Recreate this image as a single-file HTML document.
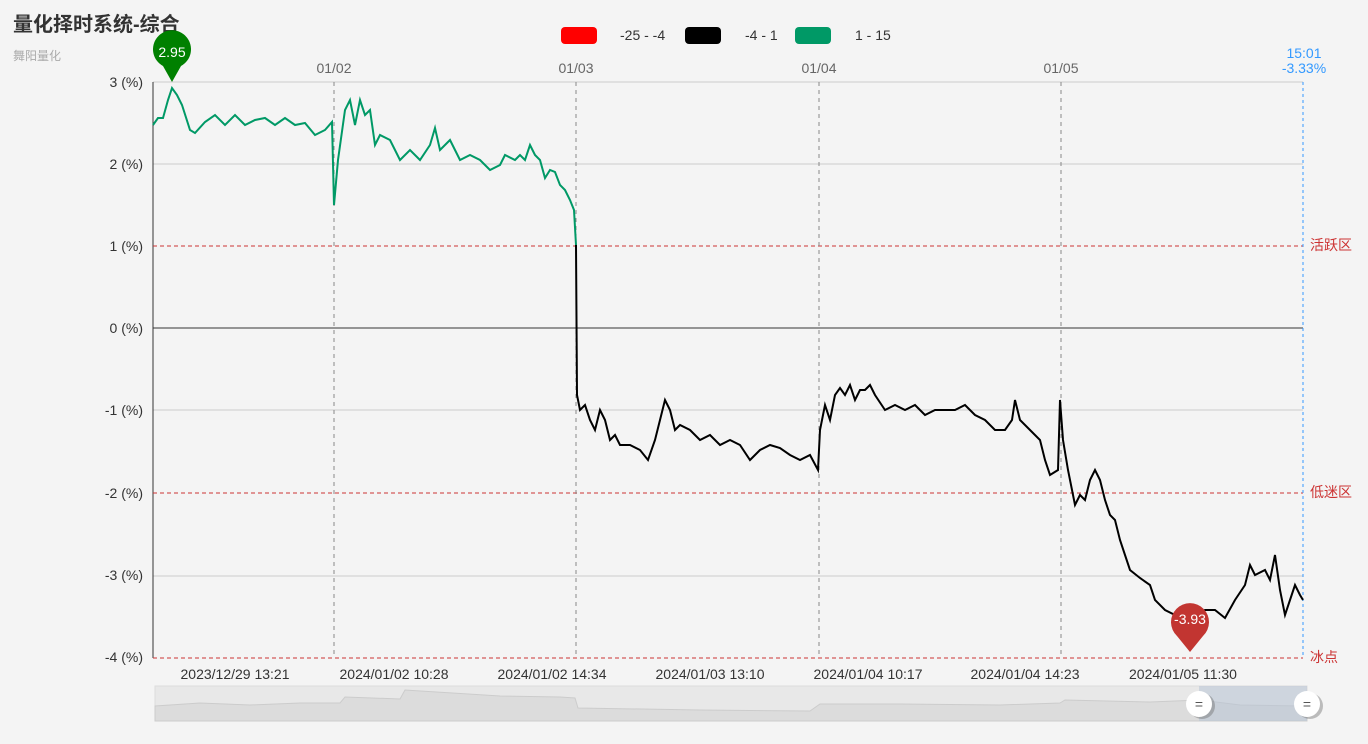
<!DOCTYPE html>
<html><head><meta charset="utf-8"><style>
body{margin:0;background:#f4f4f4;width:1368px;height:739px;overflow:hidden;font-family:"Liberation Sans","Noto Sans CJK SC",sans-serif}
</style></head><body>
<svg width="1368" height="739" xmlns="http://www.w3.org/2000/svg" font-family="Liberation Sans, Noto Sans CJK SC, sans-serif">
<text x="13" y="31" font-size="20" font-weight="bold" fill="#333">量化择时系统-综合</text>
<text x="13" y="60" font-size="12" fill="#aaa">舞阳量化</text>
<rect x="561" y="27" width="36" height="17" rx="4" fill="#f00"/><text x="620" y="40" font-size="14" fill="#333">-25 - -4</text>
<rect x="685" y="27" width="36" height="17" rx="4" fill="#000"/><text x="745" y="40" font-size="14" fill="#333">-4 - 1</text>
<rect x="795" y="27" width="36" height="17" rx="4" fill="#009966"/><text x="855" y="40" font-size="14" fill="#333">1 - 15</text>
<g stroke="#ccc" stroke-width="1">
<line x1="153" y1="82" x2="1303" y2="82"/><line x1="153" y1="164" x2="1303" y2="164"/><line x1="153" y1="410" x2="1303" y2="410"/><line x1="153" y1="576" x2="1303" y2="576"/>
</g>
<line x1="153" y1="328" x2="1303" y2="328" stroke="#333"/>
<line x1="153" y1="82" x2="153" y2="658" stroke="#333"/>
<g stroke="#c33" stroke-dasharray="4,3"><line x1="153" y1="246" x2="1303" y2="246"/><line x1="153" y1="493" x2="1303" y2="493"/><line x1="153" y1="658" x2="1303" y2="658"/></g>
<g stroke="#888" stroke-dasharray="4,4"><line x1="334" y1="82" x2="334" y2="658"/><line x1="576" y1="82" x2="576" y2="658"/><line x1="819" y1="82" x2="819" y2="658"/><line x1="1061" y1="82" x2="1061" y2="658"/></g>
<line x1="1303" y1="82" x2="1303" y2="658" stroke="#39f" stroke-dasharray="3,3"/>
<g font-size="14" fill="#333" text-anchor="end">
<text x="143" y="87">3 (%)</text><text x="143" y="169">2 (%)</text><text x="143" y="251">1 (%)</text><text x="143" y="333">0 (%)</text><text x="143" y="415">-1 (%)</text><text x="143" y="498">-2 (%)</text><text x="143" y="580">-3 (%)</text><text x="143" y="662">-4 (%)</text>
</g>
<g font-size="14" fill="#666" text-anchor="middle"><text x="334" y="73">01/02</text><text x="576" y="73">01/03</text><text x="819" y="73">01/04</text><text x="1061" y="73">01/05</text></g>
<text x="1304" y="58" font-size="14" fill="#39f" text-anchor="middle">15:01</text>
<text x="1304" y="73" font-size="14" fill="#39f" text-anchor="middle">-3.33%</text>
<g font-size="14" fill="#c33"><text x="1310" y="250">活跃区</text><text x="1310" y="497">低迷区</text><text x="1310" y="662">冰点</text></g>
<g font-size="14" fill="#333" text-anchor="middle"><text x="235" y="679">2023/12/29 13:21</text><text x="394" y="679">2024/01/02 10:28</text><text x="552" y="679">2024/01/02 14:34</text><text x="710" y="679">2024/01/03 13:10</text><text x="868" y="679">2024/01/04 10:17</text><text x="1025" y="679">2024/01/04 14:23</text><text x="1183" y="679">2024/01/05 11:30</text></g>
<polyline fill="none" stroke="#009966" stroke-width="2" points="153,125 158,118 163,118 168,100 172,88 177,95 182,105 190,130 195,133 205,122 215,115 225,125 235,115 245,125 255,120 265,118 275,125 285,118 295,125 305,123 315,135 325,130 332,122 334,205 338,160 345,110 350,100 355,125 360,100 365,115 370,110 375,145 380,135 390,140 400,160 410,150 420,160 430,145 435,128 440,150 450,140 460,160 470,155 480,160 490,170 500,165 505,155 515,160 520,155 525,160 530,145 535,155 540,160 545,178 550,170 555,172 560,185 565,190 570,200 574,210 576,245"/>
<polyline fill="none" stroke="#000" stroke-width="2" points="576,245 577,395 580,410 585,405 590,420 595,430 600,410 605,420 610,440 615,435 620,445 630,445 640,450 648,460 655,440 660,420 665,400 670,410 675,430 680,425 690,430 700,440 710,435 720,445 730,440 740,445 750,460 760,450 770,445 780,448 790,455 800,460 810,455 818,470 820,430 825,405 830,420 835,395 840,388 845,395 850,385 855,400 860,390 865,390 870,385 875,395 885,410 895,405 905,410 915,405 925,415 935,410 945,410 955,410 965,405 975,415 985,420 995,430 1005,430 1012,420 1015,400 1020,420 1030,430 1040,440 1045,460 1050,475 1058,470 1060,400 1063,440 1068,470 1075,505 1080,495 1085,500 1090,480 1095,470 1100,480 1105,500 1110,515 1115,520 1120,540 1125,555 1130,570 1140,578 1150,585 1155,600 1165,610 1175,615 1185,620 1190,650 1195,625 1205,610 1215,610 1225,618 1235,600 1245,585 1250,565 1255,575 1265,570 1270,580 1275,555 1280,590 1285,615 1290,600 1295,585 1300,595 1303,600"/>
<path d="M172,82 L163,66 A19,19 0 1 1 181,66 Z" fill="#008000"/>
<text x="172" y="57" font-size="14" fill="#fff" text-anchor="middle">2.95</text>
<path d="M1190,652 L1177,636 A19,19 0 1 1 1203,636 Z" fill="#c23531"/>
<text x="1190" y="624" font-size="14" fill="#fff" text-anchor="middle">-3.93</text>
<rect x="155" y="686" width="1152" height="35" fill="#e8e8e8" stroke="#ddd"/>
<path d="M155,706 L200,703 L250,705 L300,703 L340,703 L345,697 L400,699 L405,690 L500,696 L560,697 L575,698 L578,708 L700,710 L810,711 L820,704 L900,704 L1000,705 L1060,703 L1065,700 L1150,702 L1200,700 L1240,705 L1300,706 L1307,708 L1307,721 L155,721Z" fill="#dcdcdc" stroke="#ccc"/>
<rect x="1199" y="686" width="108" height="35" fill="#b8c4d6" opacity="0.55"/>
<g><circle cx="1202" cy="706" r="13" fill="#666" opacity="0.4"/><circle cx="1199" cy="704" r="13" fill="#fff"/><text x="1199" y="709" font-size="14" fill="#555" text-anchor="middle">=</text>
<circle cx="1310" cy="706" r="13" fill="#666" opacity="0.4"/><circle cx="1307" cy="704" r="13" fill="#fff"/><text x="1307" y="709" font-size="14" fill="#555" text-anchor="middle">=</text></g>
</svg>
</body></html>
